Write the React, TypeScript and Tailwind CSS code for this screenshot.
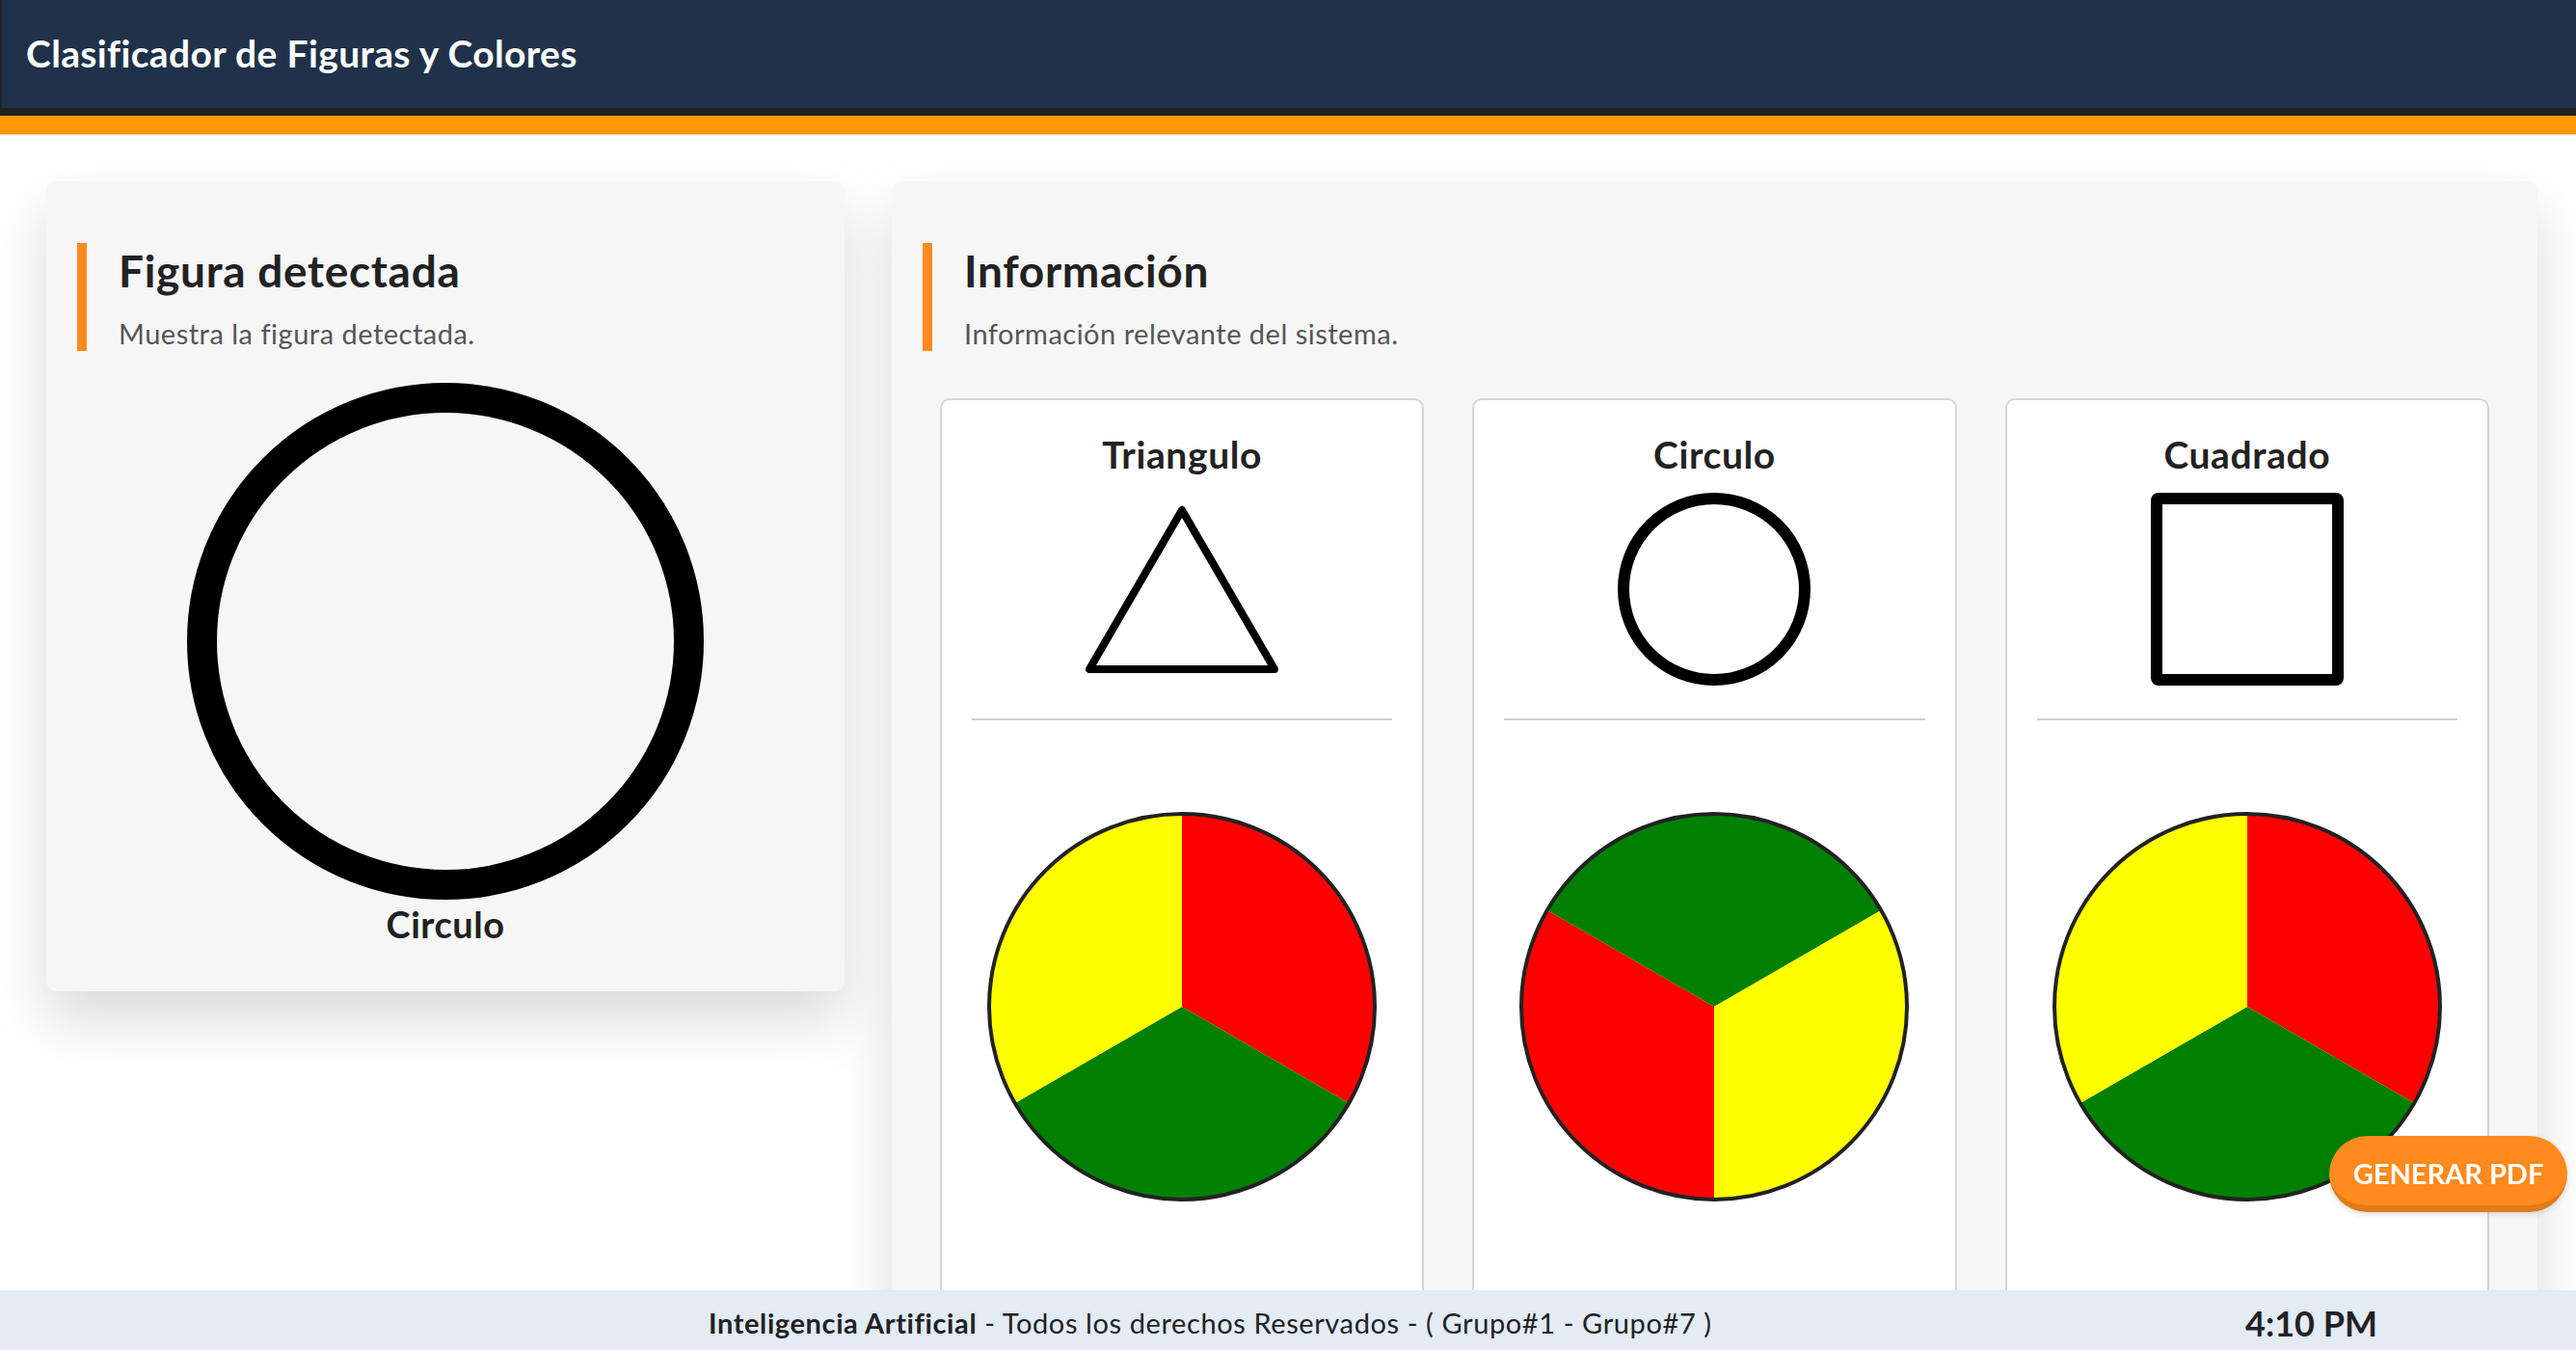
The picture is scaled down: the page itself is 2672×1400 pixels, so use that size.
import React from "react";

const font = { fontFamily: "Lato, 'Noto Sans', sans-serif" };

function SectionHeader({ title, subtitle }: { title: string; subtitle: string }) {
  return (
    <div className="h-[112px] border-l-[10px] border-[#ff8a1d] pl-[33px] pt-[6px]">
      <div className="text-[46px] leading-none font-bold tracking-[0.7px] text-[#222]">{title}</div>
      <div className="mt-[27px] text-[29px] leading-none tracking-[0.5px] text-[#555]">{subtitle}</div>
    </div>
  );
}

function Pie({ variant }: { variant: "a" | "b" }) {
  const c = 202;
  const P = {
    t0: "202,2",
    t60: "375.2,102",
    t120: "375.2,302",
    t180: "202,402",
    t240: "28.8,302",
    t300: "28.8,102",
  };
  const seg = (a: string, b: string) => `M${c},${c} L${a} A200,200 0 0 1 ${b} Z`;
  const segs =
    variant === "a"
      ? [
          { d: seg(P.t0, P.t120), f: "#ff0000" },
          { d: seg(P.t120, P.t240), f: "#008000" },
          { d: seg(P.t240, P.t0), f: "#ffff00" },
        ]
      : [
          { d: seg(P.t300, P.t60), f: "#008000" },
          { d: seg(P.t60, P.t180), f: "#ffff00" },
          { d: seg(P.t180, P.t300), f: "#ff0000" },
        ];
  return (
    <svg width="404" height="404" viewBox="0 0 404 404">
      {segs.map((s, i) => (
        <path key={i} d={s.d} fill={s.f} />
      ))}
      <circle cx="202" cy="202" r="200" fill="none" stroke="#222" strokeWidth="4" />
    </svg>
  );
}

function Shape({ kind }: { kind: "tri" | "circ" | "sq" }) {
  return (
    <svg width="200" height="200" viewBox="0 0 200 200">
      {kind === "tri" && (
        <polygon points="100,18 4,183 196,183" fill="none" stroke="#000" strokeWidth="8" strokeLinejoin="round" />
      )}
      {kind === "circ" && <circle cx="100" cy="100" r="94" fill="none" stroke="#000" strokeWidth="12" />}
      {kind === "sq" && <rect x="6" y="6" width="188" height="188" rx="2" fill="none" stroke="#000" strokeWidth="12" />}
    </svg>
  );
}

function InfoCard({ title, kind, pie }: { title: string; kind: "tri" | "circ" | "sq"; pie: "a" | "b" }) {
  return (
    <div className="h-[1000px] rounded-[10px] border-2 border-[#d6d6d6] bg-white flex flex-col items-center pt-[37px]">
      <div className="text-[39px] leading-none font-bold tracking-[0.6px] text-[#222]">{title}</div>
      <div className="mt-[20px]">
        <Shape kind={kind} />
      </div>
      <div className="mt-[34px] h-[2px] self-stretch mx-[31px] bg-[#cfcfcf]" />
      <div className="mt-[95px]">
        <Pie variant={pie} />
      </div>
    </div>
  );
}

export default function App() {
  return (
    <div className="h-screen w-full flex flex-col overflow-hidden bg-white" style={font}>
      <header className="h-[120px] shrink-0 bg-[#1f3249] border-l-2 border-b-8 border-[#222] pl-[25px] pt-[36px]">
        <div className="text-[39px] leading-none font-bold tracking-[0.35px] text-white">Clasificador de Figuras y Colores</div>
      </header>
      <div className="h-[20px] shrink-0 bg-[#ff9800] border-b border-[#ffd9a0]" />
      <main className="flex-1 min-h-0 overflow-hidden flex items-start gap-[49px] pl-[48px] pr-[40px] pt-[48px]">
        <section className="w-[828px] h-[840px] shrink-0 rounded-[10px] bg-[#f6f6f6] shadow-[0_30px_60px_rgba(0,0,0,0.15)] pt-[64px] px-[32px] flex flex-col">
          <SectionHeader title="Figura detectada" subtitle="Muestra la figura detectada." />
          <div className="mt-[33px] flex flex-col items-center">
            <svg width="536" height="536" viewBox="0 0 536 536">
              <circle cx="268" cy="268" r="252.5" fill="none" stroke="#000" strokeWidth="31" />
            </svg>
            <div className="mt-[6px] text-[38px] leading-none font-bold tracking-[0.5px] text-[#222]">Circulo</div>
          </div>
        </section>
        <section className="flex-1 h-[1300px] rounded-[10px] bg-[#f6f6f6] shadow-[0_30px_60px_rgba(0,0,0,0.15)] pt-[64px] px-[32px]">
          <SectionHeader title="Información" subtitle="Información relevante del sistema." />
          <div className="mt-[49px] px-[18px] grid grid-cols-3 gap-[50px]">
            <InfoCard title="Triangulo" kind="tri" pie="a" />
            <InfoCard title="Circulo" kind="circ" pie="b" />
            <InfoCard title="Cuadrado" kind="sq" pie="a" />
          </div>
        </section>
      </main>
      <footer className="h-[62px] shrink-0 bg-[#e3ebf5] flex items-center pt-[5px] text-[#222]">
        <div className="ml-[735px] text-[29px] leading-none tracking-[0.6px]">
          <span className="font-bold">Inteligencia Artificial</span> - Todos los derechos Reservados - ( Grupo#1 - Grupo#7 )
        </div>
        <div className="ml-auto mr-[206px] text-[36px] leading-none font-bold">4:10 PM</div>
      </footer>
      <button className="fixed right-[9px] bottom-[143px] w-[247px] h-[79px] rounded-full bg-[#ff8a1d] border-b-[7px] border-[#e07a1a] shadow-[0_2px_6px_rgba(0,0,0,0.15)] text-white text-[29px] font-bold leading-none flex items-center justify-center pt-[4px]">
        GENERAR PDF
      </button>
    </div>
  );
}
